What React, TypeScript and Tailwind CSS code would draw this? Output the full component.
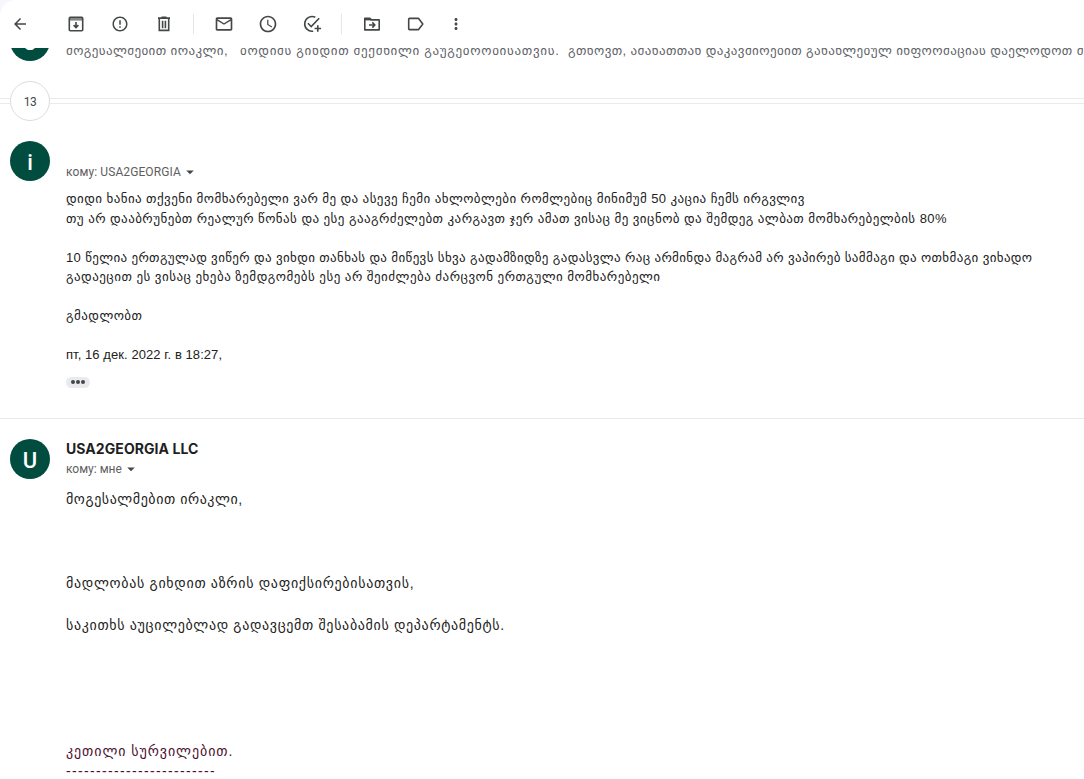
import type { ReactNode } from 'react';
import {
    MdArrowBack,
    MdArrowDropDown,
    MdErrorOutline,
    MdMailOutline,
    MdMoreVert,
    MdSchedule,
} from 'react-icons/md';

function IconButton({ label, className = '', children }: { label: string; className?: string; children: ReactNode }) {
    return (
        <button aria-label={label} className={`flex h-10 w-10 shrink-0 items-center justify-center text-[#444746] ${className}`}>
            {children}
        </button>
    );
}

function ArchiveIcon() {
    return (
        <svg width="20" height="20" viewBox="0 0 20 20" fill="none" stroke="currentColor" strokeWidth="1.6">
            <rect x="3.3" y="3.3" width="13.4" height="13.4" rx="1" />
            <path d="M3.5 5.3h13" strokeWidth="2.6" strokeOpacity="0.65" />
            <path d="M10 8v5.4M7.6 11.1l2.4 2.4 2.4-2.4" />
        </svg>
    );
}

function TrashIcon() {
    return (
        <svg width="20" height="20" viewBox="0 0 20 20" fill="none" stroke="currentColor" strokeWidth="1.6">
            <path d="M4 4.1h12M7.5 3.3h5M5.3 4.5v11.9h9.4V4.5" />
            <path d="M8.6 6.8v7.4M11.4 6.8v7.4" />
        </svg>
    );
}

function AddTaskIcon() {
    return (
        <svg width="20" height="20" viewBox="0 0 20 20" fill="none" stroke="currentColor" strokeWidth="1.6">
            <path d="M13.3 3.2A7.4 7.4 0 1 0 11.2 17.2" />
            <path d="M5.9 9.3l3.3 3.3 8-8.4" />
            <path d="M15.8 11.3v6.4M12.6 14.5H19" />
        </svg>
    );
}

function MoveIcon() {
    return (
        <svg width="20" height="20" viewBox="0 0 20 20" fill="none" stroke="currentColor" strokeWidth="1.6">
            <path d="M2.8 4.2h4.7l1.8 1.7h7.9v10H2.8z" strokeLinejoin="round" />
            <path d="M2.8 5.3h6.4" strokeWidth="2.2" />
            <path d="M7 11h5.4M10.3 8.4l2.5 2.6-2.5 2.6" />
        </svg>
    );
}

function LabelIcon() {
    return (
        <svg width="20" height="20" viewBox="0 0 20 20" fill="none" stroke="currentColor" strokeWidth="1.6">
            <path d="M3.5 4.4h9.1L16.8 10l-4.2 5.6H3.5a.8.8 0 0 1-.8-.8V5.2a.8.8 0 0 1 .8-.8z" strokeLinejoin="round" />
        </svg>
    );
}

function Toolbar() {
    return (
        <div className="flex h-12 shrink-0 items-center">
            <IconButton label="Назад"><MdArrowBack size={18} /></IconButton>
            <IconButton label="Архивировать" className="ml-4"><ArchiveIcon /></IconButton>
            <IconButton label="В спам" className="ml-1"><MdErrorOutline size={18} /></IconButton>
            <IconButton label="Удалить" className="ml-1"><TrashIcon /></IconButton>
            <div className="ml-[9px] h-5 w-px bg-[#e3e5e8]" />
            <IconButton label="Не прочитано" className="ml-[10px]"><MdMailOutline size={20} /></IconButton>
            <IconButton label="Отложить" className="ml-1"><MdSchedule size={20} /></IconButton>
            <IconButton label="Добавить в задачи" className="ml-1"><AddTaskIcon /></IconButton>
            <div className="ml-[9px] h-5 w-px bg-[#e3e5e8]" />
            <IconButton label="Переместить" className="ml-[10px]"><MoveIcon /></IconButton>
            <IconButton label="Ярлыки" className="ml-1"><LabelIcon /></IconButton>
            <IconButton label="Ещё"><MdMoreVert size={18} /></IconButton>
        </div>
    );
}

function Avatar({ letter }: { letter: string }) {
    return (
        <div className="flex h-10 w-10 shrink-0 items-center justify-center rounded-full bg-[#004d40] pt-[2px] font-[Roboto,sans-serif] text-[22px] font-medium text-white">
            {letter}
        </div>
    );
}

function Recipient({ name, className = '' }: { name: string; className?: string }) {
    return (
        <div className={`flex h-5 items-center font-[Roboto,sans-serif] text-xs text-[#5e5e5e] ${className}`}>
            <span>кому: {name}</span>
            <MdArrowDropDown size={18} className="text-[#444746]" />
        </div>
    );
}

export default function App() {
    return (
        <div className="h-[779px] w-[1084px] overflow-hidden bg-[#f6f8fc] font-['Liberation_Sans','DejaVu_Sans',sans-serif] text-[13px] text-[#222222]">
            <div className="h-full rounded-tl-2xl bg-white">
                <Toolbar />

                {/* collapsed message, scrolled half under the toolbar */}
                <div className="flex h-[33px] items-start overflow-hidden pl-[10px]">
                    <div className="-mt-[27px]"><Avatar letter="U" /></div>
                    <p className="-mt-[7px] ml-4 whitespace-pre leading-5 text-[#5f6368]">
                        <span className="tracking-[0.41px]">{'მოგესალმებით ირაკლი,   '}</span>
                        <span className="tracking-[0.69px]">{'ბოდიშს გიხდით შექმნილი გაუგებრობისათვის.  '}</span>
                        <span className="tracking-[0.4px]">გთხოვთ, ამანათთან დაკავშირებით განახლებულ ინფორმაციას დაელოდოთ მ</span>
                    </p>
                </div>

                <div className="flex h-10 items-center">
                    <div className="h-[6px] w-[10px] border-y border-[#e8eaec]" />
                    <div className="flex h-10 w-10 items-center justify-center rounded-full border border-[#dadce0] pt-[2px] font-[Roboto,sans-serif] text-xs tracking-[-0.4px] text-[#444746]">13</div>
                    <div className="h-[6px] flex-1 border-y border-[#e8eaec]" />
                </div>

                <section className="flex h-[298px] border-b border-[#e8eaed] pl-[10px] pt-5">
                    <Avatar letter="i" />
                    <div className="ml-4 pt-[21px]">
                        <Recipient name="USA2GEORGIA" className="tracking-[0.1px]" />
                        <div className="mt-[7px] whitespace-nowrap leading-[19.5px]">
                            <p className="tracking-[0.424px]">დიდი ხანია თქვენი მომხარებელი ვარ მე და ასევე ჩემი ახლობლები რომლებიც მინიმუმ 50 კაცია ჩემს ირგვლივ</p>
                            <p className="tracking-[0.443px]">თუ არ დააბრუნებთ რეალურ წონას და ესე გააგრძელებთ კარგავთ ჯერ ამათ ვისაც მე ვიცნობ და შემდეგ ალბათ მომხარებელბის 80%</p>
                            <br />
                            <p className="tracking-[0.363px]">10 წელია ერთგულად ვიწერ და ვიხდი თანხას და მიწევს სხვა გადამზიდზე გადასვლა რაც არმინდა მაგრამ არ ვაპირებ სამმაგი და ოთხმაგი ვიხადო</p>
                            <p className="tracking-[0.474px]">გადაეცით ეს ვისაც ეხება ზემდგომებს ესე არ შეიძლება ძარცვონ ერთგული მომხარებელი</p>
                            <br />
                            <p className="tracking-[0.45px]">გმადლობთ</p>
                            <br />
                            <p className="tracking-[0.07px]">пт, 16 дек. 2022 г. в 18:27,</p>
                        </div>
                        <button className="mt-3 flex h-[11px] w-6 items-center justify-center gap-px rounded-full bg-[#e8eaed]">
                            <i className="h-1 w-1 rounded-full bg-[#444746]" />
                            <i className="h-1 w-1 rounded-full bg-[#444746]" />
                            <i className="h-1 w-1 rounded-full bg-[#444746]" />
                        </button>
                    </div>
                </section>

                <section className="flex pl-[10px] pt-5">
                    <Avatar letter="U" />
                    <div className="ml-4">
                        <h3 className="h-5 font-[Inter,Roboto,sans-serif] text-sm font-bold leading-5 tracking-[0.07px] text-[#1f1f1f]">USA2GEORGIA LLC</h3>
                        <Recipient name="мне" />
                        <div className="mt-[10px] whitespace-nowrap text-sm leading-[21px]">
                            <p className="tracking-[0.56px]">მოგესალმებით ირაკლი,</p>
                            <p className="mt-[63px] tracking-[0.69px]">მადლობას გიხდით აზრის დაფიქსირებისათვის,</p>
                            <p className="mt-[21px] tracking-[0.66px]">საკითხს აუცილებლად გადავცემთ შესაბამის დეპარტამენტს.</p>
                            <div className="mt-[105px] text-[#4c1130]">
                                <p className="tracking-[0.93px]">კეთილი სურვილებით.</p>
                                <p className="-mt-px tracking-[1.34px]">-------------------------</p>
                            </div>
                        </div>
                    </div>
                </section>
            </div>
        </div>
    );
}
